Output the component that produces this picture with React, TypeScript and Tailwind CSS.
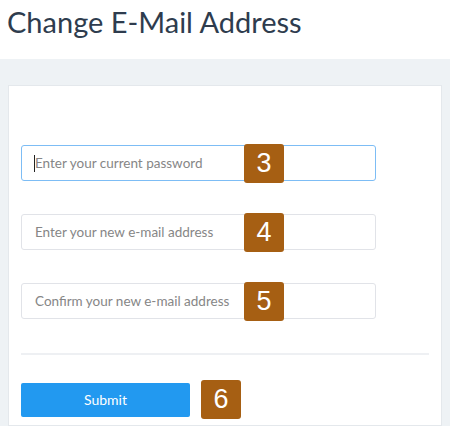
import React from "react";

function Badge({ n }: { n: number }) {
    return (
        <div className="flex h-[39px] w-[40px] items-center justify-center rounded-[3px] bg-[#a65f13] text-[27px] leading-none text-white [font-family:'Liberation_Sans',Arial,sans-serif]">
            {n}
        </div>
    );
}

function Field({ placeholder, badge, focused = false }: { placeholder: string; badge: number; focused?: boolean }) {
    return (
        <div className="relative w-[355px]">
            <input
                placeholder={placeholder}
                className={
                    "h-[36px] w-full rounded-[3px] border bg-white px-[13px] text-[13.5px] text-[#333] outline-none placeholder:text-[#868686] " +
                    (focused ? "border-[#7dbdf5]" : "border-[#e1e3e8]")
                }
            />
            {focused && <div className="absolute left-[13px] top-[10px] h-[17px] w-px bg-[#222]" />}
            <div className="absolute left-[223px] top-[-1px]">
                <Badge n={badge} />
            </div>
        </div>
    );
}

export default function App() {
    return (
        <div className="h-[426px] w-[450px] overflow-hidden bg-white [font-family:Lato,'Open_Sans',sans-serif]">
            <div className="h-[59px] pl-[7px] pt-[2px]">
                <h1 className="text-[29px] leading-[40px] text-[#2e3c4e]">Change E-Mail Address</h1>
            </div>
            <div className="h-[367px] bg-[#eef2f5] px-2 pt-[26px]">
                <div className="h-full border border-[#e4e8ec] bg-white px-3 pt-[59px]">
                    <div className="flex flex-col gap-[33px]">
                        <Field placeholder="Enter your current password" badge={3} focused />
                        <Field placeholder="Enter your new e-mail address" badge={4} />
                        <Field placeholder="Confirm your new e-mail address" badge={5} />
                    </div>
                    <div className="mt-[34px] h-[2px] bg-[#eef0f3]" />
                    <div className="mt-[25px] flex items-center gap-[11px]">
                        <button className="h-[34px] w-[169px] rounded-[2px] bg-[#2299f0] text-[14px] text-white">
                            Submit
                        </button>
                        <Badge n={6} />
                    </div>
                </div>
            </div>
        </div>
    );
}
